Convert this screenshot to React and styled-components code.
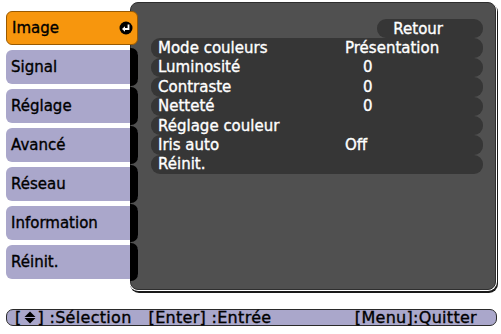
import React from 'react';
import styled, { createGlobalStyle } from 'styled-components';

const GlobalStyle = createGlobalStyle`
  html, body {
    margin: 0;
    padding: 0;
    background: #fff;
  }
  body {
    font-family: "DejaVu Sans", "Liberation Sans", sans-serif;
    font-size: 15px;
    -webkit-text-stroke: 0.35px currentColor;
  }
`;

const Screen = styled.div`
  width: 501px;
  height: 334px;
  overflow: hidden;
`;

const Main = styled.div`
  display: flex;
  align-items: flex-start;
  padding: 2px 5px 0 6px;
`;

const TabList = styled.div`
  display: flex;
  flex-direction: column;
  gap: 5px;
  width: 132px;
  flex: none;
  margin-top: 9px;
  margin-right: -8px;
  position: relative;
  z-index: 1;
`;

const Tab = styled.div`
  position: relative;
  display: flex;
  align-items: center;
  justify-content: space-between;
  height: 34px;
  box-sizing: border-box;
  padding: 0 5px 0 5px;
  border-radius: 6px;
  color: #000;
  background: ${(p) => (p.$active ? '#f7960d' : '#aaa7cb')};
  border: ${(p) => (p.$active ? '1px solid #9a5a00' : 'none')};
  padding-right: ${(p) => (p.$active ? '4px' : '13px')};

  ${(p) =>
    !p.$active &&
    `
    &::after {
      content: '';
      position: absolute;
      right: 0;
      top: -2px;
      bottom: -2px;
      width: 8px;
      background: #000;
      border-radius: 0 7px 7px 0;
    }
  `}
`;

const Panel = styled.div`
  flex: 1;
  height: 288px;
  box-sizing: border-box;
  background: #505050;
  border: 1px solid #2e2e2e;
  border-radius: 8px;
  box-shadow: 0 0 0 1px #fff, 1px 2px 0 1px #1a1a1a;
  padding: 16px 12px 0 20px;
  display: flex;
  flex-direction: column;
  color: #fff;
`;

const BackRow = styled.div`
  align-self: flex-end;
  width: 106px;
  height: 19.4px;
  box-sizing: border-box;
  border-radius: 9px;
  background: #363636;
  display: flex;
  align-items: center;
  justify-content: flex-end;
  padding-right: 40px;
`;

const Row = styled.div`
  display: grid;
  grid-template-columns: 187px 1fr;
  align-items: center;
  height: 19.4px;
  border-radius: 9px;
  background: #363636;
  padding-left: 7px;
  white-space: nowrap;
`;

const Value = styled.span`
  padding-left: ${(p) => p.$indent || 0}px;
`;

const EnterIcon = () => (
  <svg width="14" height="14" viewBox="0 0 14 14">
    <circle cx="7" cy="7" r="6.5" fill="#000" />
    <path d="M9.5 3.5 V8 H5.5" stroke="#fff" strokeWidth="1.8" fill="none" />
    <path d="M3 8 L6 5.3 V10.7 Z" fill="#fff" />
  </svg>
);

const UpDownIcon = () => (
  <svg width="12" height="13" viewBox="0 0 12 13" style={{ verticalAlign: '-1px', margin: '0 2px' }}>
    <path d="M6 0.5 L11.5 6 H0.5 Z" fill="#000" />
    <path d="M0.5 7 H11.5 L6 12.5 Z" fill="#000" />
  </svg>
);

const Footer = styled.div`
  margin: 19px 4px 0 6px;
  height: 17px;
  box-sizing: border-box;
  border: 1px solid #2a2a2a;
  border-radius: 7px;
  background: #aaa7cb;
  display: flex;
  align-items: center;
  padding: 0 19px 0 8px;
  font-size: 16px;
  letter-spacing: 0.3px;
  color: #000;
  white-space: nowrap;
`;

const Hint = styled.span`
  margin-right: ${(p) => p.$gap || 0}px;
  margin-left: ${(p) => (p.$right ? 'auto' : '0')};
`;

const tabs = ['Image', 'Signal', 'Réglage', 'Avancé', 'Réseau', 'Information', 'Réinit.'];

const rows = [
  ['Mode couleurs', 'Présentation', 0],
  ['Luminosité', '0', 18],
  ['Contraste', '0', 18],
  ['Netteté', '0', 18],
  ['Réglage couleur', '', 0],
  ['Iris auto', 'Off', 0],
  ['Réinit.', '', 0],
];

export default function App() {
  return (
    <Screen>
      <GlobalStyle />
      <Main>
        <TabList>
          {tabs.map((t, i) => (
            <Tab key={t} $active={i === 0}>
              <span>{t}</span>
              {i === 0 && <EnterIcon />}
            </Tab>
          ))}
        </TabList>
        <Panel>
          <BackRow>Retour</BackRow>
          {rows.map(([label, value, indent]) => (
            <Row key={label}>
              <span>{label}</span>
              <Value $indent={indent}>{value}</Value>
            </Row>
          ))}
        </Panel>
      </Main>
      <Footer>
        <Hint $gap={17}>
          [<UpDownIcon />] :Sélection
        </Hint>
        <Hint>[Enter] :Entrée</Hint>
        <Hint $right>[Menu]:Quitter</Hint>
      </Footer>
    </Screen>
  );
}
